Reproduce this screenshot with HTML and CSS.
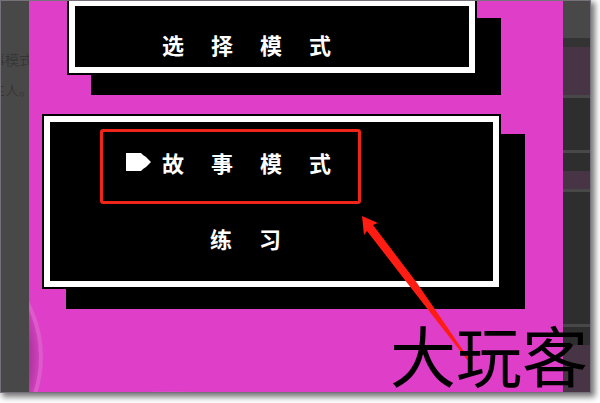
FILE: index.html
```html
<!DOCTYPE html>
<html lang="zh-CN">
<head>
<meta charset="utf-8">
<title>选择模式</title>
<link rel="stylesheet" href="styles.css">
</head>
<body>
<main class="frame">
  <aside class="page-text">
    <p>事模式</p>
    <p>主人。</p>
  </aside>
  <section class="stage">
    <div class="bubble"></div>
    <div class="glow"></div>
    <header class="panel panel-title">
      <h1 class="label"><span>选</span><span>择</span><span>模</span><span>式</span></h1>
    </header>
    <nav class="panel panel-menu">
      <button class="item selected" type="button">
        <svg class="pointer" viewBox="0 0 26 18" aria-hidden="true"><path d="M0 0H15L17 2L20 4L25 9L20 14L17 16L15 18H0Z"/></svg>
        <span class="label"><span>故</span><span>事</span><span>模</span><span>式</span></span>
      </button>
      <button class="item plain" type="button">
        <span class="label"><span>练</span><span>习</span></span>
      </button>
    </nav>
  </section>
  <aside class="rail">
    <i class="top"></i><i class="edge"></i><i class="tint large"></i><i class="line"></i><i class="block"></i><i class="line"></i><i class="gap"></i><i class="tint"></i><i class="line"></i><i class="fill"></i><i class="line"></i><i class="gap"></i><i class="tint large"></i>
  </aside>
  <svg class="arrow" viewBox="0 0 112 152" aria-hidden="true"><path d="M1 0L17 7L12 9L56 67L112 149L111 150L47 68L6 15L3 19Z"/></svg>
  <div class="watermark">大玩客</div>
</main>
</body>
</html>
```
FILE: styles.css
```css
* { box-sizing: border-box; }
body {
  margin: 0;
  background: #fff;
  font-family: "Noto Sans CJK SC", sans-serif;
}
.frame {
  position: relative;
  display: grid;
  grid-template-columns: 29px 1fr 28px;
  margin: 0 9px 10px 0;
  min-height: 393px;
  box-shadow: 3px 3px 6px 1px #777;
}
.frame::after {
  content: "";
  position: absolute;
  inset: 0;
  border: 1px solid #77717a;
}
.page-text {
  display: flex;
  flex-direction: column;
  align-items: flex-end;
  padding-top: 44px;
  overflow: hidden;
  background: #484848;
  color: #303030;
  font-size: 14px;
  font-weight: 300;
  line-height: 30px;
}
.page-text p {
  margin: 0 -4px 0 0;
  white-space: nowrap;
}
.stage {
  position: relative;
  overflow: hidden;
  background: #df3ec8;
}
.bubble {
  position: absolute;
  left: -222px;
  bottom: -82px;
  width: 236px;
  height: 236px;
  border: 4px solid #dd5acb;
  border-radius: 50%;
  background: radial-gradient(circle closest-side, #a8359b 91%, #d040bc 100%);
}
.glow {
  position: absolute;
  left: 96px;
  bottom: -8px;
  width: 90px;
  height: 10px;
  border-radius: 50%;
  background: #de4dca;
}
.panel {
  position: relative;
  border: 6px solid #fff;
  background: #000;
  box-shadow: 0 0 0 2px #000, 24px 20px 0 2px #000;
}
.panel-title {
  margin: 0 88px 0 40px;
  height: 73px;
  padding: 23px 0 0 87px;
}
.panel-menu {
  margin: 43px 64px 0 15px;
  height: 171px;
  padding: 7px 0 0 50px;
}
.label {
  display: flex;
  gap: 27px;
  margin: 0;
  color: #fff;
  font-size: 22px;
  font-weight: 700;
  line-height: 30px;
}
.item {
  display: flex;
  align-items: center;
  border: 0;
  padding: 0;
  background: none;
  font-family: inherit;
}
.selected {
  width: 261px;
  height: 75px;
  gap: 10px;
  padding: 0 0 9px 23px;
  border: 3px solid #f02418;
  border-radius: 3px;
}
.pointer {
  width: 26px;
  height: 18px;
  fill: #fff;
}
.plain {
  margin: 19px 0 0 110px;
}
.rail {
  display: flex;
  flex-direction: column;
  background: #2e2e2e;
}
.rail i { flex: none; height: 18px; }
.rail .top { height: 38px; background: #484848; }
.rail .edge { height: 9px; background: #333; }
.rail .tint { background: #473545; }
.rail .large { height: 48px; }
.rail .line { height: 3px; background: #484848; }
.rail .block { height: 52px; }
.rail .fill { flex: 1; }
.arrow {
  position: absolute;
  top: 216px;
  right: 118px;
  width: 112px;
  height: 152px;
  fill: #ff1c12;
}
.watermark {
  position: absolute;
  right: 3px;
  bottom: 7px;
  color: #000;
  font-size: 66px;
  font-weight: 400;
  line-height: 66px;
  white-space: nowrap;
}
```
